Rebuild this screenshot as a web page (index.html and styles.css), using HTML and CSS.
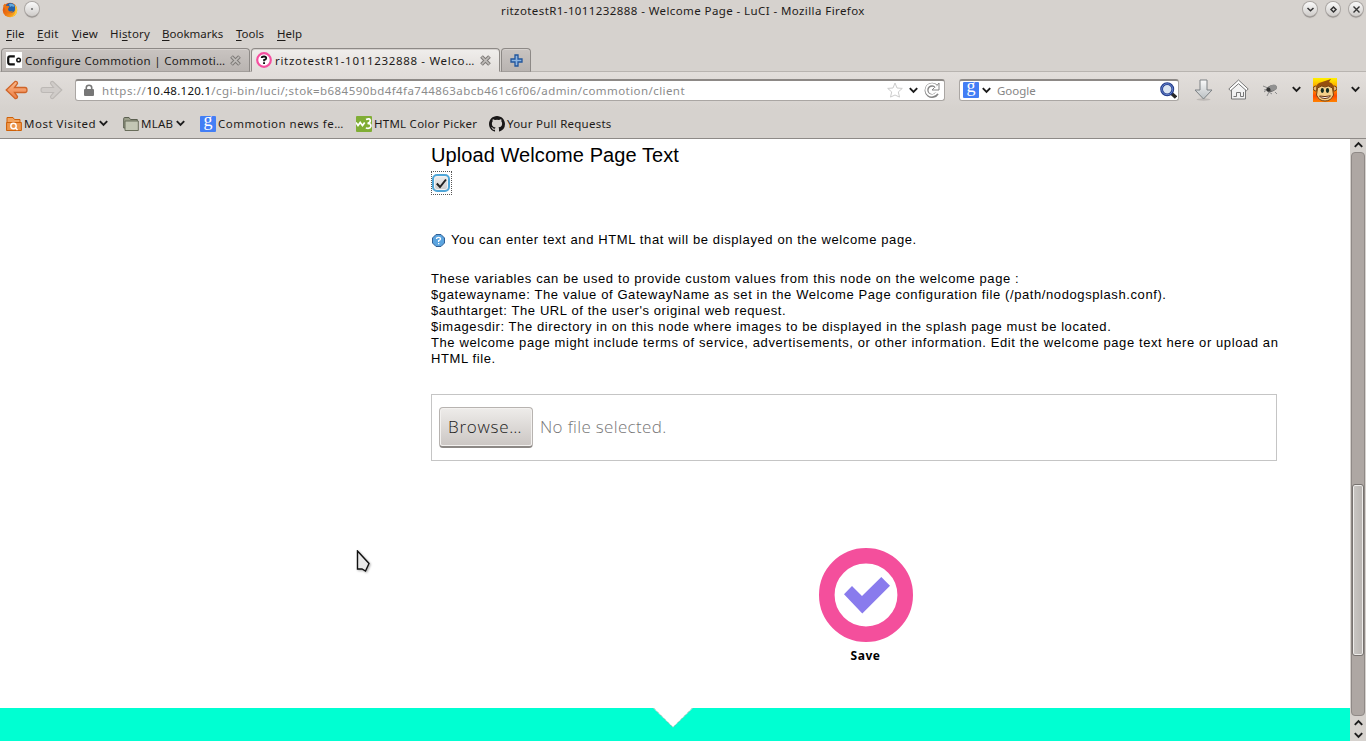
FILE: index.html
```
<!DOCTYPE html>
<html lang="en">
<head>
<meta charset="utf-8">
<title>ritzotestR1-1011232888 - Welcome Page - LuCI</title>
<link rel="stylesheet" href="styles.css">
</head>
<body>
<svg class="defs" width="0" height="0">
  <defs>
    <linearGradient id="orange" x1="0" y1="0" x2="0" y2="1"><stop offset="0" stop-color="#f9b98c"/><stop offset="1" stop-color="#ee7d43"/></linearGradient>
    <linearGradient id="steel" x1="0" y1="0" x2="0" y2="1"><stop offset="0" stop-color="#fafafa"/><stop offset="1" stop-color="#b9bfc2"/></linearGradient>
    <linearGradient id="flame" x1="0" y1="0" x2="1" y2="1"><stop offset="0" stop-color="#d84510"/><stop offset=".5" stop-color="#ee7412"/><stop offset="1" stop-color="#fcc62c"/></linearGradient>
    <linearGradient id="sunset" x1="0" y1="0" x2="0" y2="1"><stop offset="0" stop-color="#fff200"/><stop offset=".5" stop-color="#ff8a00"/><stop offset=".75" stop-color="#ff4a00"/><stop offset="1" stop-color="#ff8400"/></linearGradient>
    <symbol id="chev" viewBox="0 0 9 7"><path d="M.8 1.2 4.5 5 8.2 1.2" fill="none" stroke="#1c1c1c" stroke-width="1.9"/></symbol>
    <symbol id="close" viewBox="0 0 11 11"><path d="M1.500 1.500 9.500 9.500M9.500 1.500 1.500 9.500" stroke="#7d7a77" stroke-width="3.800"/><path d="M1.900 1.900 9.100 9.100M9.100 1.900 1.900 9.100" stroke="#c0bdba" stroke-width="1.500"/></symbol>
  </defs>
</svg>
<header class="chrome">
  <div class="titlebar">
    <svg class="fox" width="16" height="16" viewBox="0 0 16 16"><circle cx="8" cy="8" r="7.300" fill="url(#flame)"/><circle cx="8.400" cy="6" r="5" fill="#2461a8"/><path d="M7 2q4-1 6 2l-2 1-1-1-2 1z" fill="#63a9dc"/><path d="M1 4Q2 2 3 1.500L4 4q2-.6 3.500.6L6.200 6.500Q5.500 9 8.500 9.500L11 9Q9 12 6 11 3 9 2 5z" fill="#ee7411"/><path d="M13 3Q16 7 14.500 11 12 15 8 15q5-1 5.500-6z" fill="#fcd03d"/></svg>
    <span class="knob"><i></i></span>
    <span class="window-title">ritzotestR1-1011232888 - Welcome Page - LuCI - Mozilla Firefox</span>
    <span class="knob"><svg width="9" height="9" viewBox="0 0 9 9"><path d="M1.500 3 4.500 5.700 7.500 3" fill="none" stroke="#333" stroke-width="1.500"/></svg></span>
    <span class="knob"><svg width="9" height="9" viewBox="0 0 9 9"><path d="M4.500 2 7 4.500 4.500 7 2 4.500z" fill="none" stroke="#333" stroke-width="1.500"/></svg></span>
    <span class="knob"><svg width="9" height="9" viewBox="0 0 9 9"><path d="M1.500 1.500l6 6m0-6-6 6" stroke="#333" stroke-width="1.400"/></svg></span>
  </div>
  <nav class="menu">
    <span class="m-file"><u>F</u>ile</span><span class="m-edit"><u>E</u>dit</span><span class="m-view"><u>V</u>iew</span><span class="m-history">Hi<u>s</u>tory</span><span class="m-bookmarks"><u>B</u>ookmarks</span><span class="m-tools"><u>T</u>ools</span><span class="m-help"><u>H</u>elp</span>
  </nav>
  <div class="tabs">
    <div class="tab tab-first">
      <svg width="16" height="16" viewBox="0 0 16 16"><path d="M0 0h16v16H0z" fill="#fff"/><path d="M8.800 4.300H4Q2.200 4.300 2.200 6.300v4q0 2 1.800 2h4.800" fill="none" stroke="#111" stroke-width="2.200"/><circle cx="12.600" cy="8" r="1.800" fill="none" stroke="#111" stroke-width="1.500"/></svg>
      <span class="tab-text">Configure Commotion | Commoti…</span><svg class="x" width="11" height="11"><use href="#close"/></svg>
    </div>
    <div class="tab tab-active">
      <svg width="16" height="16" viewBox="0 0 16 16"><circle cx="8" cy="8" r="6.800" fill="#fff" stroke="#f54f9f" stroke-width="2.200"/><path d="M5.700 6Q5.700 4.500 8 4.500T10.200 6.200Q10.200 7.500 8.100 8V9.200" fill="none" stroke="#111" stroke-width="1.800"/><path d="M7.100 10.200H9V12H7.100z" fill="#111"/></svg>
      <span class="tab-text">ritzotestR1-1011232888 - Welco…</span><svg class="x" width="11" height="11"><use href="#close"/></svg>
    </div>
    <div class="tab tab-new"><svg width="13" height="13" viewBox="0 0 13 13"><path d="M5 1h3v4h4v3H8v4H5V8H1V5h4z" fill="#8db5e2" stroke="#21559c" stroke-width="1.300"/></svg></div>
  </div>
  <div class="nav">
    <svg class="back" width="23" height="20" viewBox="0 0 23 20"><path d="M1.200 10 10 1.500q2.500-.5 2.500 2L9.500 7.500H20q2 0 2 2.500t-2 2.500H9.500l3 4q0 2.500-2.500 2z" fill="url(#orange)" stroke="#cf6428" stroke-width="1.300"/></svg>
    <svg class="forward" width="23" height="20" viewBox="0 0 23 20"><path d="M21.800 10 13 1.500q-2.500-.5-2.500 2l3 4H3Q1 7.500 1 10t2 2.500h10.500l-3 4q0 2.500 2.500 2z" fill="#d0ccc9" stroke="#bcb8b5" stroke-width="1.100"/></svg>
    <div class="field url-field">
      <svg class="lock" width="10" height="12" viewBox="0 0 10 12"><path d="M2.300 6V3.500a2.700 2.300 0 0 1 5.400 0V6" fill="none" stroke="#777" stroke-width="1.600"/><rect y="5" width="10" height="7" rx="1" fill="#777"/></svg>
      <span class="url"><span class="scheme">https://</span><b>10.48.120.1</b>/cgi-bin/luci/;stok=b684590bd4f4fa744863abcb461c6f06/admin/commotion/client</span>
      <svg class="star" width="16" height="16" viewBox="0 0 16 16"><path d="M8 1l2 5 5.300.4-4 3.500 1.200 5.200L8 13l-4.500 2.100 1.200-5.200-4-3.500L6 6z" fill="#fff" stroke="#cbcbcb"/></svg>
      <svg class="url-chev" width="9" height="7"><use href="#chev"/></svg>
      <svg class="reload" width="16" height="16" viewBox="0 0 16 16"><path d="M12.500 4.800A5.600 5.600 0 1 0 13 11.200" fill="none" stroke="#858585" stroke-width="4"/><path d="M15 1v7H8l2.500-2.500L12.500 4z" fill="#fff" stroke="#858585"/><path d="M12.400 4.600A5.600 5.600 0 1 0 12.600 10.800" fill="none" stroke="#fff" stroke-width="2"/></svg>
    </div>
    <div class="field search-field">
      <span class="google">g</span><svg class="search-chev" width="9" height="7"><use href="#chev"/></svg>
      <span class="hint">Google</span>
      <svg class="lens" width="17" height="17" viewBox="0 0 17 17"><path d="M11 11l5 4.500" stroke="#292929" stroke-width="3.400"/><circle cx="7.200" cy="7.200" r="5.600" fill="#dbe5f2" stroke="#243c8c" stroke-width="2.800"/><circle cx="7.200" cy="7.200" r="5.500" fill="none" stroke="#6685cc"/></svg>
    </div>
    <svg class="download" width="19" height="22" viewBox="0 0 19 22"><ellipse cx="9.500" cy="20.500" rx="7" ry="1.200" fill="#bdb9b6"/><path d="M6 1h7v10h5l-8.500 9L1 11h5z" fill="url(#steel)" stroke="#7c8184"/></svg>
    <svg class="home" width="21" height="21" viewBox="0 0 21 21"><path d="M3.500 10v10h14V10l-7-6.500z" fill="#f2f2f2" stroke="#777"/><path d="M10.500 1 .8 10l1.800 1.700 7.900-7 7.900 7 1.800-1.700z" fill="#fff" stroke="#777"/><path d="M5.500 17.500h3v-4h4v4h3v-4.500" fill="none" stroke="#777"/></svg>
    <svg class="fly" width="17" height="15" viewBox="0 0 17 15"><path d="M1 4l5 2M2 8l4-1-4 3M5 14l2-4 3 2M13 10l2 2" fill="none" stroke="#8b8b8b"/><ellipse cx="9.500" cy="6.500" rx="5.500" ry="3.200" transform="rotate(-20 9.500 6.500)" fill="#686868"/><path d="M6 6Q10 1 14 3l1 4-5 2z" fill="#919191"/><circle cx="6.500" cy="7.500" r="1.900" fill="#333"/></svg>
    <svg class="fly-chev" width="9" height="7"><use href="#chev"/></svg>
    <svg class="monkey" width="24" height="24" viewBox="0 0 24 24"><path d="M0 0h24v24H0z" fill="url(#sunset)"/><circle cx="2.800" cy="10.500" r="2.500" fill="#e8ba77" stroke="#75400e"/><circle cx="21.200" cy="10.500" r="2.500" fill="#e8ba77" stroke="#75400e"/><path d="M3 13Q2 5 9 4l9-3-2 3q6 2 5 9z" fill="#964f0e"/><path d="M4.500 10Q9 6.500 12 9q3-2.500 7.500 1l1 7q-2.500 6-8.500 6t-8.500-6z" fill="#f4d08a" stroke="#75400e"/><ellipse cx="9.300" cy="12.500" rx="1.600" ry="2.400" fill="#142b20"/><ellipse cx="14.500" cy="12.500" rx="1.600" ry="2.400" fill="#142b20"/><path d="M6.500 18q5.500 1.200 11-.2-1 2.700-5.500 2.700t-5.500-2.500z" fill="#fff" stroke="#642d0c"/></svg>
    <svg class="monkey-chev" width="9" height="7"><use href="#chev"/></svg>
  </div>
  <div class="bookmarks">
    <div class="bm bm-most"><svg width="16" height="16" viewBox="0 0 16 16"><path d="M1 14.500V1.500h6l1.500 2H14v11z" fill="#f2a45f" stroke="#cf6108"/><path d="M.6 6.500h14.800v8H.6z" fill="#ed964b" stroke="#cf6108"/><circle cx="7.500" cy="10" r="2.700" fill="none" stroke="#fff" stroke-width="1.400"/><path d="M9.500 12l2 2" stroke="#fff" stroke-width="1.400"/></svg><span>Most Visited</span><svg class="c" width="9" height="7"><use href="#chev"/></svg></div>
    <div class="bm bm-mlab"><svg width="16" height="16" viewBox="0 0 16 16"><path d="M.7 12V2.500q0-1 1-1H6l1.500 2h6.800V12z" fill="#9a9e89" stroke="#5b5f50"/><path d="M2 5h13.300v9.500H2z" fill="#c3c6b4" stroke="#696d5a"/></svg><span>MLAB</span><svg class="c" width="9" height="7"><use href="#chev"/></svg></div>
    <div class="bm bm-news"><i class="google">g</i><span>Commotion news fe…</span></div>
    <div class="bm bm-html"><svg width="16" height="16" viewBox="0 0 16 16"><rect width="16" height="16" rx="1" fill="#80ad35"/><path d="M0 6.500 2 9.500 4.200 6.500 6.500 9.500 8.700 6.500M10 3.500q4-1.800 4.300 1 0 2.500-2.800 2.800 4 .2 3.300 3.200-.8 2.600-5 1.500" fill="none" stroke="#fff" stroke-width="1.700"/></svg><span>HTML Color Picker</span></div>
    <div class="bm bm-git"><svg width="16" height="16" viewBox="0 0 16 16"><path fill="#191717" d="M8 0C3.580 0 0 3.580 0 8c0 3.540 2.290 6.530 5.470 7.590.4.070.55-.17.55-.38v-1.490c-2.230.48-2.700-1.070-2.700-1.070-.36-.92-.89-1.170-.89-1.170-.73-.5.050-.49.050-.49.800.06 1.230.83 1.230.83.720 1.220 1.870.87 2.330.66.070-.52.280-.87.500-1.070-1.770-.2-3.640-.89-3.640-3.950 0-.87.310-1.590.82-2.150-.08-.2-.36-1.020.08-2.120 0 0 .67-.21 2.200.82a7.600 7.600 0 0 1 4 0c1.530-1.040 2.200-.82 2.200-.82.440 1.100.16 1.920.08 2.120.51.560.82 1.270.82 2.150 0 3.070-1.870 3.750-3.650 3.950.29.250.54.730.54 1.480v2.190c0 .21.150.46.550.38A8 8 0 0 0 16 8c0-4.420-3.580-8-8-8z"/></svg><span>Your Pull Requests</span></div>
  </div>
</header>
<div class="viewport">
  <main class="page">
    <section class="content">
      <h1>Upload Welcome Page Text</h1>
      <span class="focus-ring"><span class="checkbox"><svg width="13" height="13" viewBox="0 0 13 13"><path d="M1.800 6.500 5 10l6-7.500" fill="none" stroke="#222" stroke-width="2"/></svg></span></span>
      <p class="help"><svg width="13" height="13" viewBox="0 0 13 13"><path d="M4 .5h5L12.500 4v5L9 12.500H4L.5 9V4z" fill="#5ba4df" stroke="#315f95"/><path d="M4.500 5Q4.500 3.300 6.500 3.300T8.500 5Q8.500 6 6.600 6.700V8" fill="none" stroke="#fff" stroke-width="1.300"/><path d="M6 9h1.300v1.200H6z" fill="#fff"/></svg><span class="help-text">You can enter text and HTML that will be displayed on the welcome page.</span></p>
      <div class="vars">
        <p class="v1">These variables can be used to provide custom values from this node on the welcome page :</p>
        <p class="v2">$gatewayname: The value of GatewayName as set in the Welcome Page configuration file (/path/nodogsplash.conf).</p>
        <p class="v3">$authtarget: The URL of the user's original web request.</p>
        <p class="v4">$imagesdir: The directory in on this node where images to be displayed in the splash page must be located.</p>
        <p class="v5">The welcome page might include terms of service, advertisements, or other information. Edit the welcome page text here or upload an<br>HTML file.</p>
      </div>
      <div class="upload"><span class="browse">Browse…</span><span class="nofile">No file selected.</span></div>
      <div class="save">
        <svg width="94" height="94" viewBox="0 0 94 94"><circle cx="47" cy="47" r="39.200" fill="#fff" stroke="#f44f9c" stroke-width="15.600"/><path d="M25 46.300l8-8.300 10 10L62.300 29l8.700 8.700L43.300 65.500z" fill="#897bed"/></svg>
        <span class="save-text">Save</span>
      </div>
    </section>
    <footer class="footer"><svg width="40" height="20" viewBox="0 0 40 20"><path d="M0 0h40L20 19.500z" fill="#fff"/><path d="M.5 0 20 19.500 39.500 0" fill="none" stroke="#49a58d" stroke-dasharray="1 1"/></svg></footer>
    <svg class="pointer" width="15" height="23" viewBox="0 0 15 23"><path d="M1.500 1 13 13.500 9.500 21 6 19H1.500z" fill="#e9e9e9" stroke="#111" stroke-width="1.400"/></svg>
  </main>
  <aside class="scroll">
    <svg class="up" width="9" height="7"><use href="#chev"/></svg>
    <div class="track"><div class="thumb"></div></div>
    <svg class="up" width="9" height="7"><use href="#chev"/></svg>
    <svg class="down" width="9" height="7"><use href="#chev"/></svg>
  </aside>
</div>
</body>
</html>
```
FILE: styles.css
```
* { box-sizing: border-box; }
body { margin: 0; width: 1366px; height: 741px; overflow: hidden; display: flex; flex-direction: column; background: #fff; font-family: "Noto Sans", sans-serif; }
svg { display: block; flex: none; }
.defs { position: absolute; }
p, h1 { margin: 0; }

.chrome { height: 139px; flex: none; background: #d6d2ce; border-bottom: 1px solid #8e8a87; color: #1e1b19; font-size: 11.5px; white-space: nowrap; }
.titlebar { height: 22px; display: flex; align-items: flex-start; padding: 2px 3px 0 2px; }
.fox { margin-right: 8px; }
.knob { width: 14px; height: 14px; border-radius: 50%; background: linear-gradient(#fafafa, #cfccc9); box-shadow: 0 0 0 1px #aaa6a3, 0 1.5px 1px #77736f; display: flex; align-items: center; justify-content: center; margin: 0 0 0 9px; flex: none; }
.fox + .knob { margin-left: -1px; }
.knob i { width: 2px; height: 2px; background: #888; }
.window-title { margin-left: 462px; width: 801px; height: 18px; line-height: 18px; letter-spacing: .41px; }
.menu { height: 25px; display: flex; line-height: 24px; padding-left: 6px; }
.menu u { text-underline-offset: 2px; }
.m-file { width: 31px; }
.m-edit { width: 35px; letter-spacing: .3px; }
.m-view { width: 38px; letter-spacing: .2px; }
.m-history { width: 52px; letter-spacing: .2px; }
.m-bookmarks { width: 74px; }
.m-tools { width: 41px; }

.tabs { height: 25px; display: flex; padding: 1px 0 0 1px; border-bottom: 1px solid #b8b4b0; }
.tab { height: 24px; display: flex; align-items: center; border: 1px solid #8d8986; border-bottom-color: #a29e9b; border-radius: 4px 4px 0 0; background: linear-gradient(#c9c4c1, #b9b4b1); box-shadow: inset 0 1px #d5d1ce; padding-left: 4px; }
.tab-first { width: 249px; letter-spacing: .3px; }
.tab-active { width: 249px; background: linear-gradient(#f0eeec, #e2dedb); border-bottom-color: #e2dedb; margin-left: 1px; letter-spacing: .68px; }
.tab-new { width: 30px; padding-left: 8px; margin-left: 1px; }
.tab-text { width: 205px; margin: 2px 0 0 3px; line-height: 20px; }

.nav { height: 37px; display: flex; align-items: center; background: linear-gradient(#e2dedb, #d6d2ce); padding: 0 0 2px 5px; }
.forward { margin-left: 12px; }
.field { height: 22px; border: 1px solid #aaa6a3; border-top: 2px solid #8d8986; border-radius: 3px; background: #fff; display: flex; align-items: center; }
.url-field { width: 870px; margin-left: 12px; }
.lock { margin-left: 8px; }
.url { margin-left: 8px; width: 785px; color: #8b8b8b; letter-spacing: .43px; }
.scheme { letter-spacing: .6px; }
.url b { color: #111; font-weight: 400; letter-spacing: .27px; }
.url-chev { margin-left: 6px; }
.reload { margin-left: 6px; }
.search-field { width: 220px; margin-left: 14px; }
.google { width: 16px; height: 16px; border-radius: 1px; background: #437ef5; color: #fff; font: normal 400 18px/9px "Liberation Serif", serif; letter-spacing: 0; text-align: center; flex: none; }
.search-field .google { margin-left: 3px; }
.search-chev { margin-left: 3px; }
.hint { margin-left: 6px; width: 163px; color: #858585; }
.download { margin-left: 15px; }
.home { margin-left: 15px; }
.fly { margin-left: 13px; }
.fly-chev { margin-left: 13px; }
.monkey { margin-left: 12px; }
.monkey-chev { margin-left: 14px; }

.bookmarks { height: 29px; display: flex; padding-left: 6px; }
.bm { display: flex; align-items: center; height: 29px; }
.bm span { margin-left: 2px; flex: none; }
.bm-most { width: 117px; letter-spacing: .5px; }
.bm-most span { width: 73px; }
.bm-mlab { width: 77px; letter-spacing: .25px; }
.bm-mlab span { width: 33px; }
.bm-news { width: 156px; letter-spacing: .47px; }
.bm-html { width: 133px; letter-spacing: .25px; }
.bm-git { letter-spacing: .24px; }
.c { margin-left: 2px; }

.viewport { height: 602px; display: flex; }
.page { width: 1350px; display: flex; flex-direction: column; position: relative; }
.content { height: 569px; padding-left: 431px; color: #000; font: 13px/16px "Liberation Sans", Arial, sans-serif; display: flex; flex-direction: column; align-items: flex-start; white-space: nowrap; }
h1 { font-size: 20px; font-weight: 400; line-height: 32px; height: 32px; letter-spacing: .08px; }
.focus-ring { width: 21px; height: 24px; border: 1px dotted #555; display: flex; align-items: center; }
.checkbox { width: 18px; height: 18px; border: 2px solid #4fa6d8; border-radius: 5px; background: linear-gradient(#eee, #ccc); box-shadow: inset 0 0 0 1px #f3f3f3; display: flex; align-items: center; justify-content: center; }
.help { display: flex; align-items: center; height: 16px; margin-top: 37px; }
.help svg { margin: 1px 6px 0 1px; }
.help-text { letter-spacing: .61px; }
.vars { margin-top: 23px; letter-spacing: .595px; }
.v1 { letter-spacing: .61px; }
.v4 { letter-spacing: .585px; }
.upload { margin-top: 27px; width: 846px; height: 67px; border: 1px solid #c5c5c5; padding-left: 7px; display: flex; align-items: center; font: 300 17px/24px "Open Sans", sans-serif; }
.browse { width: 94px; height: 41px; border: 1px solid #b7b3b0; border-bottom: 2px solid #8c8885; border-radius: 4px; background: linear-gradient(#eeecea, #cbc6c3); box-shadow: inset 0 0 0 1px #f3f1ef; display: flex; align-items: center; padding-left: 8px; color: #222; letter-spacing: .75px; }
.nofile { margin: -1px 0 0 7px; color: #777; letter-spacing: .33px; }
.save { margin: 87px 0 0 387.5px; width: 94px; display: flex; flex-direction: column; align-items: center; }
.save-text { font: 700 12px/20px "Noto Sans", sans-serif; letter-spacing: .5px; margin-top: 4px; }
.footer { height: 33px; background: #00ffd2; padding-left: 653px; }
.pointer { position: absolute; left: 356px; top: 411px; filter: drop-shadow(1px 1px 1px #aaa); }

.scroll { width: 16px; background: #d6d2ce; display: flex; flex-direction: column; align-items: center; padding-top: 2px; }
.up { transform: rotate(180deg); }
.track { width: 14px; height: 564px; margin: 4px 0 3px; background: #aea7a3; border: 1px solid #8f8986; border-radius: 4px; padding-top: 331px; }
.thumb { width: 12px; height: 172px; border: 1px solid #77726f; border-radius: 3px; background: linear-gradient(90deg, #c9c6c3, #b9b5b2); box-shadow: inset 0 0 0 1px #eeecea; }
.down { margin-top: 6px; }
```
